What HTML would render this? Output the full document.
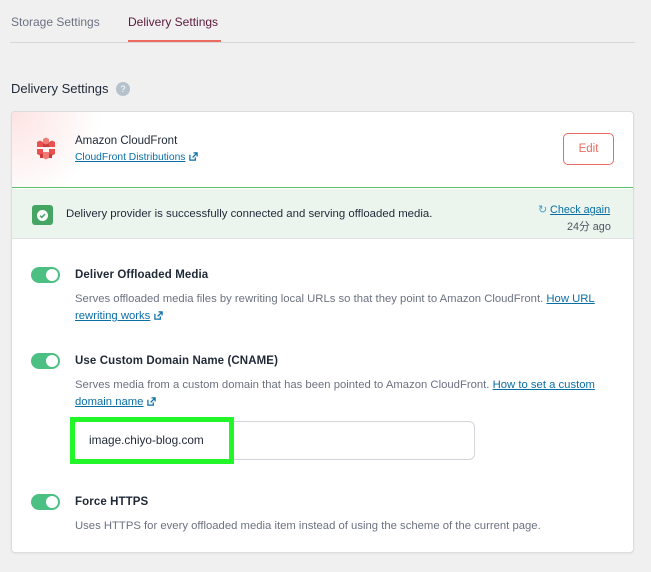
<!DOCTYPE html>
<html><head><meta charset="utf-8"><style>
*{box-sizing:border-box;margin:0;padding:0}
body{width:651px;height:572px;background:#f0f0f0;font-family:"Liberation Sans","Noto Sans CJK JP",sans-serif;color:#1f2937;position:relative;overflow:hidden}
.abs{position:absolute;white-space:nowrap}
a{color:#0a6ea5;text-decoration:underline}
.tabline{position:absolute;left:10px;top:42px;width:625px;height:1px;background:#d8d8d8}
.card{position:absolute;left:11px;top:111px;width:623px;height:442px;background:#fff;border:1px solid #dcdcdc;border-radius:4px;overflow:hidden;box-shadow:0 1px 2px rgba(0,0,0,.05)}
.hdr{position:absolute;left:0;top:0;width:100%;height:76px;background:radial-gradient(circle at 0 0,#fde3e3 0,#fff 90px);border-bottom:1.5px solid #5cbf6a}
.green{position:absolute;left:0;top:77px;width:100%;height:50px;background:#ebf5ee;border-bottom:1px solid #e2e2e2}
.tog{position:absolute;width:29px;height:16px;border-radius:8px;background:#4cc083}
.tog:after{content:"";position:absolute;right:2px;top:2px;width:12px;height:12px;border-radius:50%;background:#fff}
.t{font-size:11.5px;color:#1f2937;font-weight:600;letter-spacing:0.1px}
.d{font-size:11.3px;color:#6b7280;line-height:17px}
.ext{display:inline-block;width:9px;height:9px;margin-left:4px;vertical-align:-1px}
</style></head><body>
<div class="abs" style="left:11px;top:15px;font-size:12px;color:#6b7280">Storage Settings</div>
<div class="abs" style="left:128px;top:15px;font-size:12px;color:#5c1a3a">Delivery Settings</div>
<div class="tabline"></div>
<div style="position:absolute;left:128px;top:40px;width:93px;height:2px;background:#ec6b5f"></div>
<div class="abs" style="left:11px;top:81px;font-size:13px;color:#1f2937">Delivery Settings</div>
<div style="position:absolute;left:116px;top:82px;width:14px;height:14px;border-radius:50%;background:#b5c2cc;color:#fff;font-size:9px;text-align:center;line-height:14px">?</div>

<div class="card">
<div class="hdr"></div>
<svg style="position:absolute;left:24px;top:25px" width="20" height="24" viewBox="0 0 20 24">
<g fill="#e8514f"><path d="M7 2l3-1.5 3 1.5v4l-3 1.5-3-1.5z" fill="#f07a76"/><path d="M1 5l3-1.5 3 1.5v5H1z"/><path d="M13 5l3-1.5 3 1.5v5h-6z"/><path d="M7 6l3 1.5 3-1.5v4H7z" fill="#c93b39"/><path d="M1 12h6v5l-3 1.5L1 17z"/><path d="M13 12h6v5l-3 1.5-3-1.5z"/><path d="M7 15h6v6l-3 1.5L7 21z" fill="#f07a76"/><path d="M4 17h3v4H4z" fill="#c93b39"/><path d="M13 17h3v4h-3z" fill="#c93b39"/></g></svg>
<div class="abs" style="left:63px;top:23px;font-size:11.5px;color:#1f2937">Amazon CloudFront</div>
<div class="abs" style="left:63px;top:40px;font-size:10.3px"><a>CloudFront Distributions</a><svg class="ext" viewBox="0 0 10 10"><path d="M1 3v6h6V6M5 1h4v4M9 1L4 6" fill="none" stroke="#0a6ea5" stroke-width="1.4"/></svg></div>
<div style="position:absolute;left:551px;top:21px;width:51px;height:32px;border:1px solid #ec6b5f;border-radius:5px;color:#ec6b5f;font-size:11.5px;text-align:center;line-height:30px">Edit</div>
<div class="green"></div>
<div style="position:absolute;left:20px;top:93px;width:21px;height:20px;border-radius:3px;background:#44a662"><div style="position:absolute;left:5px;top:4.5px;width:11px;height:11px;border-radius:50%;background:#fff"></div><svg style="position:absolute;left:5px;top:4.5px" width="11" height="11" viewBox="0 0 11 11"><path d="M3 5.6l1.8 1.8L8 4" fill="none" stroke="#44a662" stroke-width="1.5"/></svg></div>
<div class="abs" style="left:54px;top:96px;font-size:11.4px;color:#1f2937">Delivery provider is successfully connected and serving offloaded media.</div>
<div class="abs" style="left:526px;top:91px;font-size:10.8px"><span style="color:#4a9fc9">↻</span> <a>Check again</a></div>
<div class="abs" style="left:555px;top:106px;font-size:10.8px;color:#4b5563">24分 ago</div>

<div class="tog" style="left:19px;top:155px"></div>
<div class="abs t" style="left:63px;top:157px">Deliver Offloaded Media</div>
<div class="abs d" style="left:63px;top:179px">Serves offloaded media files by rewriting local URLs so that they point to Amazon CloudFront. <a>How URL</a></div>
<div class="abs d" style="left:63px;top:196px"><a>rewriting works</a><svg class="ext" viewBox="0 0 10 10"><path d="M1 3v6h6V6M5 1h4v4M9 1L4 6" fill="none" stroke="#0a6ea5" stroke-width="1.4"/></svg></div>

<div class="tog" style="left:19px;top:241px"></div>
<div class="abs t" style="left:63px;top:243px">Use Custom Domain Name (CNAME)</div>
<div class="abs d" style="left:63px;top:265px">Serves media from a custom domain that has been pointed to Amazon CloudFront. <a>How to set a custom</a></div>
<div class="abs d" style="left:63px;top:282px"><a>domain name</a><svg class="ext" viewBox="0 0 10 10"><path d="M1 3v6h6V6M5 1h4v4M9 1L4 6" fill="none" stroke="#0a6ea5" stroke-width="1.4"/></svg></div>
<div style="position:absolute;left:59px;top:309px;width:404px;height:39px;border:1px solid #d4d4dc;border-radius:6px;background:#fff"></div>
<div style="position:absolute;left:58px;top:305px;width:164px;height:47px;border:5px solid #22f528"></div>
<div class="abs" style="left:77px;top:321px;font-size:11.8px;color:#1f2937">image.chiyo-blog.com</div>

<div class="tog" style="left:19px;top:382px"></div>
<div class="abs t" style="left:63px;top:384px">Force HTTPS</div>
<div class="abs d" style="left:63px;top:406px">Uses HTTPS for every offloaded media item instead of using the scheme of the current page.</div>
</div>
</body></html>
